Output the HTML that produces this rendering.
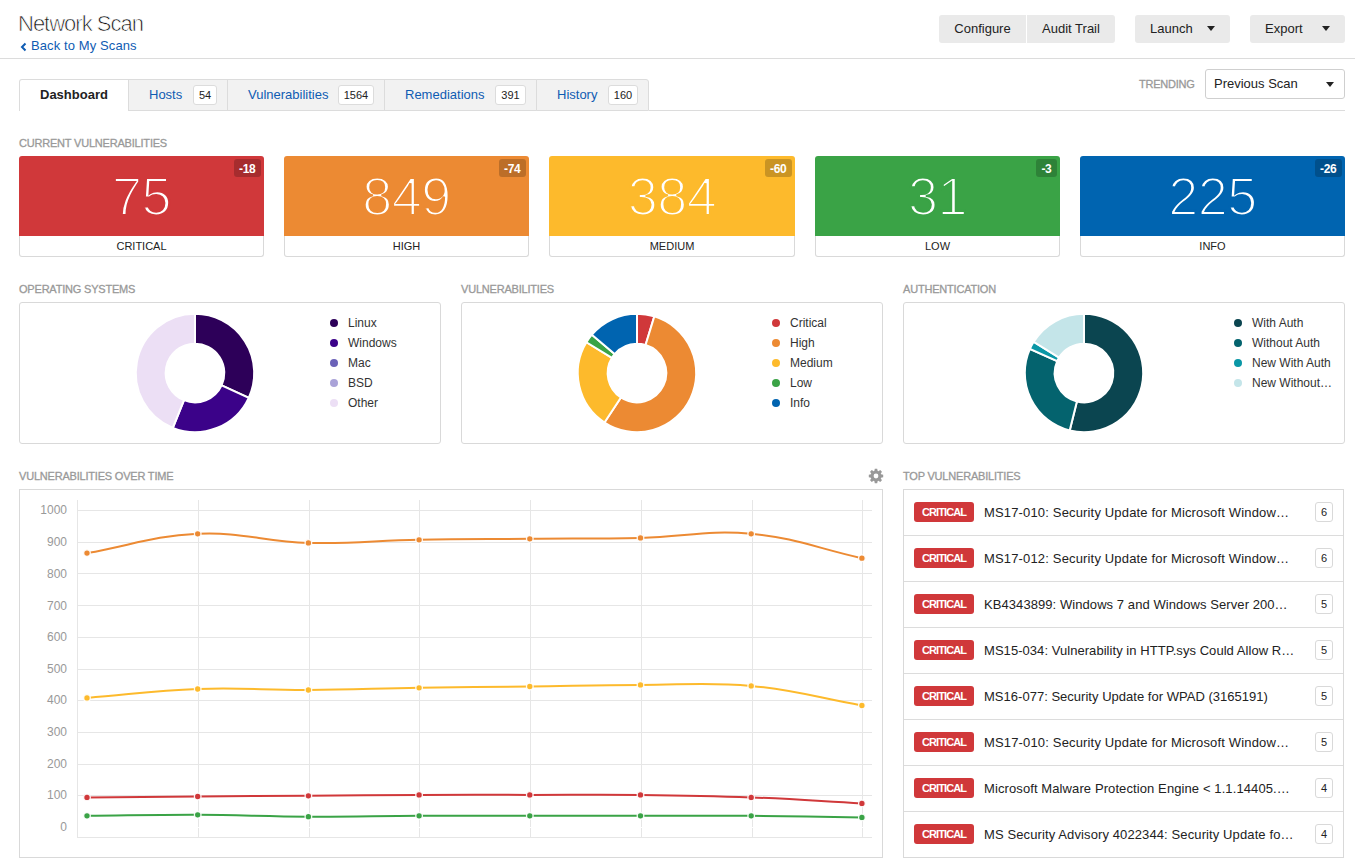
<!DOCTYPE html>
<html><head><meta charset="utf-8">
<style>
*{box-sizing:border-box;margin:0;padding:0}
html,body{width:1355px;height:866px;overflow:hidden;background:#fff}
body{font-family:"Liberation Sans",sans-serif;color:#333;position:relative}
.a{position:absolute;white-space:nowrap}
.title{left:18px;top:11px;font-size:22px;color:#111;letter-spacing:-1px;-webkit-text-stroke:0.7px #fff;line-height:26px}
.back{left:20px;top:37.5px;font-size:13px;color:#0f5cb3;line-height:16px;letter-spacing:0.1px}
.hline{left:0;top:58px;width:1355px;height:1px;background:#dcdcdc}
.btn{top:15px;height:28px;background:#eaeaea;border-radius:3px;font-size:13px;color:#222;line-height:28px;text-align:left}
.caret{position:absolute;width:0;height:0;border-left:4.5px solid transparent;border-right:4.5px solid transparent;border-top:5px solid #222}
.tab{top:79px;height:32px;background:#f2f2f2;border:1px solid #dcdcdc;font-size:13px;color:#0f5cb3;line-height:30px}
.badge{position:absolute;top:5px;height:20px;background:#fff;border:1px solid #dcdcdc;border-radius:3px;font-size:11px;color:#222;line-height:19px;text-align:center}
.lbl{font-size:11px;color:#999;letter-spacing:-0.2px;line-height:13px;-webkit-text-stroke:0.3px #999}
.sev{top:156px;height:101px;border-radius:3px;background:#fff}
.sev .bot{position:absolute;left:0;right:0;top:80px;height:21px;border:1px solid #d9d9d9;border-top:none;border-radius:0 0 3px 3px}
.sev .top{position:absolute;left:0;right:0;top:0;height:80px;color:#fff;text-align:center;border-radius:3px 3px 0 0}
.sev .num{position:absolute;left:0;right:0;top:10px;font-size:54px;line-height:60px;letter-spacing:-0.5px;-webkit-text-stroke:2.2px var(--bg)}
.sev .chg{position:absolute;right:3px;top:3px;height:18px;padding:0 5.5px;background:rgba(0,0,0,0.2);border-radius:3px;font-size:12px;font-weight:bold;line-height:20px;letter-spacing:-0.3px}
.sev .name{position:absolute;left:0;right:0;top:84px;font-size:11px;color:#222;text-align:center;line-height:13px}
.panel{border:1px solid #d9d9d9;border-radius:3px;background:#fff}
.leg{font-size:12px;color:#333;line-height:14px}
.dot{position:absolute;width:8px;height:8px;border-radius:50%}
.row{position:absolute;left:0;width:440px;height:46px;border-top:1px solid #dcdcdc}
.crit{position:absolute;left:10px;top:12px;width:60px;height:20px;background:#d0383a;border-radius:3px;color:#fff;font-size:11px;font-weight:bold;text-align:center;line-height:20px;letter-spacing:-0.9px}
.vt{position:absolute;left:80px;top:15px;font-size:13px;color:#222;line-height:16px;letter-spacing:0.1px}
.cnt{position:absolute;left:411px;top:12px;width:18px;height:20px;border:1px solid #d9d9d9;border-radius:3px;font-size:11px;text-align:center;line-height:19px;color:#222}
.yl{position:absolute;right:1288px;font-size:12px;color:#999;line-height:14px}
</style></head><body>

<div class="a title">Network Scan</div>
<div class="a back"><svg width="8" height="10" viewBox="0 0 8 10" style="position:absolute;left:0;top:4px"><path d="M5.5,1.5 L2,5 L5.5,8.5" fill="none" stroke="#0f5cb3" stroke-width="2"/></svg><span style="position:absolute;left:11px;top:0">Back&nbsp;to&nbsp;My&nbsp;Scans</span></div>
<div class="a hline"></div>

<div class="a btn" style="left:939px;width:87px;border-radius:3px 0 0 3px;text-align:center">Configure</div>
<div class="a btn" style="left:1027px;width:88px;border-radius:0 3px 3px 0;text-align:center">Audit Trail</div>
<div class="a btn" style="left:1135px;width:95px"><span style="position:absolute;left:15px">Launch</span><i class="caret" style="left:72px;top:11px"></i></div>
<div class="a btn" style="left:1250px;width:95px"><span style="position:absolute;left:15px">Export</span><i class="caret" style="left:72px;top:11px"></i></div>

<!-- tabs -->
<div class="a" style="left:649px;top:110px;width:696px;height:1px;background:#dcdcdc"></div>
<div class="a tab" style="left:19px;width:110px;background:#fff;border-bottom:none;border-radius:3px 0 0 0;color:#222;font-weight:bold;padding-left:20px">Dashboard</div>
<div class="a tab" style="left:128px;width:100px;padding-left:20px">Hosts<span class="badge" style="left:64px;width:24px">54</span></div>
<div class="a tab" style="left:227px;width:158px;padding-left:20px">Vulnerabilities<span class="badge" style="left:110px;width:36px">1564</span></div>
<div class="a tab" style="left:384px;width:153px;padding-left:20px">Remediations<span class="badge" style="left:110px;width:31px">391</span></div>
<div class="a tab" style="left:536px;width:113px;border-radius:0 3px 0 0;padding-left:20px">History<span class="badge" style="left:71px;width:30px">160</span></div>

<div class="a" style="left:1139px;top:78px;font-size:11px;color:#999;line-height:13px;letter-spacing:-0.25px;-webkit-text-stroke:0.3px #999">TRENDING</div>
<div class="a" style="left:1205px;top:69px;width:140px;height:30px;border:1px solid #cfcfcf;border-radius:3px;font-size:13px;color:#222;line-height:28px;padding-left:8px">Previous Scan<i class="caret" style="left:120px;top:12px"></i></div>

<!-- current vulnerabilities -->
<div class="a lbl" style="left:19px;top:137px">CURRENT VULNERABILITIES</div>
<div class="a sev" style="left:19px;width:245px"><div class="top" style="background:#d0383a;--bg:#d0383a"><div class="num">75</div><div class="chg">-18</div></div><div class="bot"></div><div class="name">CRITICAL</div></div>
<div class="a sev" style="left:284px;width:245px"><div class="top" style="background:#ec8a33;--bg:#ec8a33"><div class="num">849</div><div class="chg">-74</div></div><div class="bot"></div><div class="name">HIGH</div></div>
<div class="a sev" style="left:549px;width:246px"><div class="top" style="background:#fdba2c;--bg:#fdba2c"><div class="num">384</div><div class="chg">-60</div></div><div class="bot"></div><div class="name">MEDIUM</div></div>
<div class="a sev" style="left:815px;width:245px"><div class="top" style="background:#3aa346;--bg:#3aa346"><div class="num">31</div><div class="chg">-3</div></div><div class="bot"></div><div class="name">LOW</div></div>
<div class="a sev" style="left:1080px;width:265px"><div class="top" style="background:#0064b0;--bg:#0064b0"><div class="num">225</div><div class="chg">-26</div></div><div class="bot"></div><div class="name">INFO</div></div>

<!-- donut panels -->
<div class="a lbl" style="left:19px;top:283px">OPERATING SYSTEMS</div>
<div class="a lbl" style="left:461px;top:283px">VULNERABILITIES</div>
<div class="a lbl" style="left:903px;top:283px">AUTHENTICATION</div>
<div class="a panel" style="left:19px;top:302px;width:422px;height:142px"></div>
<div class="a panel" style="left:461px;top:302px;width:422px;height:142px"></div>
<div class="a panel" style="left:903px;top:302px;width:442px;height:142px"></div>

<svg class="a" style="left:0;top:0" width="1355" height="866"><g stroke="#fff" stroke-width="2" stroke-linejoin="miter">
<!--os-->
<path d="M195.00,313.80 A59.2,59.2 0 0 1 248.74,397.83 L221.60,385.29 A29.3,29.3 0 0 0 195.00,343.70 Z" fill="#2d0059"/>
<path d="M248.74,397.83 A59.2,59.2 0 0 1 172.82,427.89 L184.02,400.17 A29.3,29.3 0 0 0 221.60,385.29 Z" fill="#3b0289"/>
<path d="M172.82,427.89 A59.2,59.2 0 0 1 195.00,313.80 L195.00,343.70 A29.3,29.3 0 0 0 184.02,400.17 Z" fill="#ecdff5"/>
<!--vul-->
<path d="M637.00,313.80 A59.2,59.2 0 0 1 654.31,316.39 L645.57,344.98 A29.3,29.3 0 0 0 637.00,343.70 Z" fill="#d0383a"/>
<path d="M654.31,316.39 A59.2,59.2 0 1 1 604.50,422.48 L620.91,397.49 A29.3,29.3 0 1 0 645.57,344.98 Z" fill="#ec8a33"/>
<path d="M604.50,422.48 A59.2,59.2 0 0 1 586.42,342.24 L611.96,357.78 A29.3,29.3 0 0 0 620.91,397.49 Z" fill="#fdba2c"/>
<path d="M586.42,342.24 A59.2,59.2 0 0 1 591.85,334.71 L614.65,354.05 A29.3,29.3 0 0 0 611.96,357.78 Z" fill="#3aa346"/>
<path d="M591.85,334.71 A59.2,59.2 0 0 1 637.00,313.80 L637.00,343.70 A29.3,29.3 0 0 0 614.65,354.05 Z" fill="#0064b0"/>
<!--auth-->
<path d="M1084.00,313.80 A59.2,59.2 0 1 1 1069.68,430.44 L1076.91,401.43 A29.3,29.3 0 1 0 1084.00,343.70 Z" fill="#0b4550"/>
<path d="M1069.68,430.44 A59.2,59.2 0 0 1 1029.92,348.92 L1057.23,361.08 A29.3,29.3 0 0 0 1076.91,401.43 Z" fill="#04636e"/>
<path d="M1029.92,348.92 A59.2,59.2 0 0 1 1033.69,341.80 L1059.10,357.56 A29.3,29.3 0 0 0 1057.23,361.08 Z" fill="#0a97a6"/>
<path d="M1033.69,341.80 A59.2,59.2 0 0 1 1084.00,313.80 L1084.00,343.70 A29.3,29.3 0 0 0 1059.10,357.56 Z" fill="#c4e5e9"/>

</g></svg>

<div class="a leg" style="left:330px;top:316px">
<i class="dot" style="left:0;top:3px;background:#2d0059"></i><span style="position:absolute;left:18px;top:0">Linux</span>
<i class="dot" style="left:0;top:23px;background:#3b0289"></i><span style="position:absolute;left:18px;top:20px">Windows</span>
<i class="dot" style="left:0;top:43px;background:#6b62b8"></i><span style="position:absolute;left:18px;top:40px">Mac</span>
<i class="dot" style="left:0;top:63px;background:#aaa3d8"></i><span style="position:absolute;left:18px;top:60px">BSD</span>
<i class="dot" style="left:0;top:83px;background:#ecdff5"></i><span style="position:absolute;left:18px;top:80px">Other</span>
</div>
<div class="a leg" style="left:772px;top:316px">
<i class="dot" style="left:0;top:3px;background:#d0383a"></i><span style="position:absolute;left:18px;top:0">Critical</span>
<i class="dot" style="left:0;top:23px;background:#ec8a33"></i><span style="position:absolute;left:18px;top:20px">High</span>
<i class="dot" style="left:0;top:43px;background:#fdba2c"></i><span style="position:absolute;left:18px;top:40px">Medium</span>
<i class="dot" style="left:0;top:63px;background:#3aa346"></i><span style="position:absolute;left:18px;top:60px">Low</span>
<i class="dot" style="left:0;top:83px;background:#0064b0"></i><span style="position:absolute;left:18px;top:80px">Info</span>
</div>
<div class="a leg" style="left:1234px;top:316px">
<i class="dot" style="left:0;top:3px;background:#0b4550"></i><span style="position:absolute;left:18px;top:0">With Auth</span>
<i class="dot" style="left:0;top:23px;background:#04636e"></i><span style="position:absolute;left:18px;top:20px">Without Auth</span>
<i class="dot" style="left:0;top:43px;background:#0a97a6"></i><span style="position:absolute;left:18px;top:40px">New With Auth</span>
<i class="dot" style="left:0;top:63px;background:#c4e5e9"></i><span style="position:absolute;left:18px;top:60px">New Without…</span>
</div>

<!-- vulnerabilities over time -->
<div class="a lbl" style="left:19px;top:470px">VULNERABILITIES OVER TIME</div>
<svg class="a" style="left:868px;top:467.5px" width="16" height="16" viewBox="0 0 16 16"><path fill="#999" fill-rule="evenodd" d="M6.30,2.98 L6.81,0.80 L9.19,0.80 L9.70,2.98 L10.35,3.25 L12.25,2.07 L13.93,3.75 L12.75,5.65 L13.02,6.30 L15.20,6.81 L15.20,9.19 L13.02,9.70 L12.75,10.35 L13.93,12.25 L12.25,13.93 L10.35,12.75 L9.70,13.02 L9.19,15.20 L6.81,15.20 L6.30,13.02 L5.65,12.75 L3.75,13.93 L2.07,12.25 L3.25,10.35 L2.98,9.70 L0.80,9.19 L0.80,6.81 L2.98,6.30 L3.25,5.65 L2.07,3.75 L3.75,2.07 L5.65,3.25Z M10.4,8 A2.4,2.4 0 1 0 5.6,8 A2.4,2.4 0 1 0 10.4,8Z"/></svg>
<div class="a" style="left:19px;top:489px;width:864px;height:369px;border:1px solid #d9d9d9"></div>
<svg class="a" style="left:0;top:0" width="1355" height="866">
<g stroke="#e6e6e6" stroke-width="1" fill="none">
<path d="M77,510.5H872 M77,542.5H872 M77,573.5H872 M77,605.5H872 M77,637.5H872 M77,669.5H872 M77,700.5H872 M77,732.5H872 M77,764.5H872 M77,795.5H872"/>
<path d="M77.5,500V837 M198.5,500V837 M309.5,500V837 M419.5,500V837 M530.5,500V837 M641.5,500V837 M752.5,500V837 M862.5,500V837"/>
<path d="M77,837.5H872"/>
</g>
<path d="M78,827.5H872" stroke="#fff" stroke-width="1"/>
<path d="M87.0,553.1 C131.3,545.3 153.2,535.8 197.7,533.8 C241.7,531.7 264.1,541.7 308.4,542.9 C352.6,544.1 374.8,540.6 419.1,539.8 C463.4,538.9 485.5,539.2 529.8,538.8 C574.1,538.4 596.2,538.9 640.5,537.9 C684.8,536.9 707.4,529.7 751.2,533.8 C796.0,537.9 817.6,548.4 861.9,558.2" fill="none" stroke="#ec8a33" stroke-width="2"/>
<circle cx="87.0" cy="553.1" r="3.3" fill="#ec8a33" stroke="#fff" stroke-opacity="0.9" stroke-width="1.3"/>
<circle cx="197.7" cy="533.8" r="3.3" fill="#ec8a33" stroke="#fff" stroke-opacity="0.9" stroke-width="1.3"/>
<circle cx="308.4" cy="542.9" r="3.3" fill="#ec8a33" stroke="#fff" stroke-opacity="0.9" stroke-width="1.3"/>
<circle cx="419.1" cy="539.8" r="3.3" fill="#ec8a33" stroke="#fff" stroke-opacity="0.9" stroke-width="1.3"/>
<circle cx="529.8" cy="538.8" r="3.3" fill="#ec8a33" stroke="#fff" stroke-opacity="0.9" stroke-width="1.3"/>
<circle cx="640.5" cy="537.9" r="3.3" fill="#ec8a33" stroke="#fff" stroke-opacity="0.9" stroke-width="1.3"/>
<circle cx="751.2" cy="533.8" r="3.3" fill="#ec8a33" stroke="#fff" stroke-opacity="0.9" stroke-width="1.3"/>
<circle cx="861.9" cy="558.2" r="3.3" fill="#ec8a33" stroke="#fff" stroke-opacity="0.9" stroke-width="1.3"/>
<path d="M87.0,697.9 C131.3,694.4 153.3,690.6 197.7,689.0 C241.9,687.4 264.1,690.2 308.4,690.0 C352.7,689.7 374.8,688.5 419.1,687.8 C463.4,687.1 485.5,687.1 529.8,686.5 C574.1,685.9 596.2,685.0 640.5,684.9 C684.8,684.8 707.3,681.8 751.2,685.9 C795.8,690.0 817.6,697.7 861.9,705.5" fill="none" stroke="#fdba2c" stroke-width="2"/>
<circle cx="87.0" cy="697.9" r="3.3" fill="#fdba2c" stroke="#fff" stroke-opacity="0.9" stroke-width="1.3"/>
<circle cx="197.7" cy="689.0" r="3.3" fill="#fdba2c" stroke="#fff" stroke-opacity="0.9" stroke-width="1.3"/>
<circle cx="308.4" cy="690.0" r="3.3" fill="#fdba2c" stroke="#fff" stroke-opacity="0.9" stroke-width="1.3"/>
<circle cx="419.1" cy="687.8" r="3.3" fill="#fdba2c" stroke="#fff" stroke-opacity="0.9" stroke-width="1.3"/>
<circle cx="529.8" cy="686.5" r="3.3" fill="#fdba2c" stroke="#fff" stroke-opacity="0.9" stroke-width="1.3"/>
<circle cx="640.5" cy="684.9" r="3.3" fill="#fdba2c" stroke="#fff" stroke-opacity="0.9" stroke-width="1.3"/>
<circle cx="751.2" cy="685.9" r="3.3" fill="#fdba2c" stroke="#fff" stroke-opacity="0.9" stroke-width="1.3"/>
<circle cx="861.9" cy="705.5" r="3.3" fill="#fdba2c" stroke="#fff" stroke-opacity="0.9" stroke-width="1.3"/>
<path d="M87.0,797.4 C131.3,797.0 153.4,796.8 197.7,796.5 C242.0,796.1 264.1,796.1 308.4,795.8 C352.7,795.5 374.8,795.1 419.1,794.9 C463.4,794.7 485.5,794.9 529.8,794.9 C574.1,794.9 596.2,794.4 640.5,794.9 C684.8,795.4 706.9,795.7 751.2,797.4 C795.5,799.1 817.6,801.0 861.9,803.4" fill="none" stroke="#d0383a" stroke-width="2"/>
<circle cx="87.0" cy="797.4" r="3.3" fill="#d0383a" stroke="#fff" stroke-opacity="0.9" stroke-width="1.3"/>
<circle cx="197.7" cy="796.5" r="3.3" fill="#d0383a" stroke="#fff" stroke-opacity="0.9" stroke-width="1.3"/>
<circle cx="308.4" cy="795.8" r="3.3" fill="#d0383a" stroke="#fff" stroke-opacity="0.9" stroke-width="1.3"/>
<circle cx="419.1" cy="794.9" r="3.3" fill="#d0383a" stroke="#fff" stroke-opacity="0.9" stroke-width="1.3"/>
<circle cx="529.8" cy="794.9" r="3.3" fill="#d0383a" stroke="#fff" stroke-opacity="0.9" stroke-width="1.3"/>
<circle cx="640.5" cy="794.9" r="3.3" fill="#d0383a" stroke="#fff" stroke-opacity="0.9" stroke-width="1.3"/>
<circle cx="751.2" cy="797.4" r="3.3" fill="#d0383a" stroke="#fff" stroke-opacity="0.9" stroke-width="1.3"/>
<circle cx="861.9" cy="803.4" r="3.3" fill="#d0383a" stroke="#fff" stroke-opacity="0.9" stroke-width="1.3"/>
<path d="M87.0,815.8 C131.3,815.4 153.4,814.7 197.7,814.8 C242.0,815.0 264.1,816.6 308.4,816.7 C352.7,816.9 374.8,816.0 419.1,815.8 C463.4,815.6 485.5,815.8 529.8,815.8 C574.1,815.8 596.2,815.8 640.5,815.8 C684.8,815.8 706.9,815.5 751.2,815.8 C795.5,816.1 817.6,816.7 861.9,817.4" fill="none" stroke="#3aa346" stroke-width="2"/>
<circle cx="87.0" cy="815.8" r="3.3" fill="#3aa346" stroke="#fff" stroke-opacity="0.9" stroke-width="1.3"/>
<circle cx="197.7" cy="814.8" r="3.3" fill="#3aa346" stroke="#fff" stroke-opacity="0.9" stroke-width="1.3"/>
<circle cx="308.4" cy="816.7" r="3.3" fill="#3aa346" stroke="#fff" stroke-opacity="0.9" stroke-width="1.3"/>
<circle cx="419.1" cy="815.8" r="3.3" fill="#3aa346" stroke="#fff" stroke-opacity="0.9" stroke-width="1.3"/>
<circle cx="529.8" cy="815.8" r="3.3" fill="#3aa346" stroke="#fff" stroke-opacity="0.9" stroke-width="1.3"/>
<circle cx="640.5" cy="815.8" r="3.3" fill="#3aa346" stroke="#fff" stroke-opacity="0.9" stroke-width="1.3"/>
<circle cx="751.2" cy="815.8" r="3.3" fill="#3aa346" stroke="#fff" stroke-opacity="0.9" stroke-width="1.3"/>
<circle cx="861.9" cy="817.4" r="3.3" fill="#3aa346" stroke="#fff" stroke-opacity="0.9" stroke-width="1.3"/>

</svg>
<div class="yl" style="top:503px">1000</div>
<div class="yl" style="top:535px">900</div>
<div class="yl" style="top:567px">800</div>
<div class="yl" style="top:599px">700</div>
<div class="yl" style="top:630px">600</div>
<div class="yl" style="top:662px">500</div>
<div class="yl" style="top:693px">400</div>
<div class="yl" style="top:725px">300</div>
<div class="yl" style="top:757px">200</div>
<div class="yl" style="top:788px">100</div>
<div class="yl" style="top:820px">0</div>

<!-- top vulnerabilities -->
<div class="a lbl" style="left:903px;top:470px">TOP VULNERABILITIES</div>
<div class="a" style="left:903px;top:489px;width:441px;height:369px;border:1px solid #d9d9d9;overflow:hidden">
<div class="row" style="top:-1px"><span class="crit">CRITICAL</span><span class="vt" style="letter-spacing:0.16px">MS17-010: Security Update for Microsoft Window…</span><span class="cnt">6</span></div>
<div class="row" style="top:45px"><span class="crit">CRITICAL</span><span class="vt" style="letter-spacing:0.16px">MS17-012: Security Update for Microsoft Window…</span><span class="cnt">6</span></div>
<div class="row" style="top:91px"><span class="crit">CRITICAL</span><span class="vt" style="letter-spacing:0.07px">KB4343899: Windows 7 and Windows Server 200…</span><span class="cnt">5</span></div>
<div class="row" style="top:137px"><span class="crit">CRITICAL</span><span class="vt" style="letter-spacing:0.05px">MS15-034: Vulnerability in HTTP.sys Could Allow R…</span><span class="cnt">5</span></div>
<div class="row" style="top:183px"><span class="crit">CRITICAL</span><span class="vt" style="letter-spacing:0.02px">MS16-077: Security Update for WPAD (3165191)</span><span class="cnt">5</span></div>
<div class="row" style="top:229px"><span class="crit">CRITICAL</span><span class="vt" style="letter-spacing:0.16px">MS17-010: Security Update for Microsoft Window…</span><span class="cnt">5</span></div>
<div class="row" style="top:275px"><span class="crit">CRITICAL</span><span class="vt" style="letter-spacing:0.1px">Microsoft Malware Protection Engine &lt; 1.1.14405.…</span><span class="cnt">4</span></div>
<div class="row" style="top:321px"><span class="crit">CRITICAL</span><span class="vt" style="letter-spacing:0.11px">MS Security Advisory 4022344: Security Update fo…</span><span class="cnt">4</span></div>
</div>

</body></html>
